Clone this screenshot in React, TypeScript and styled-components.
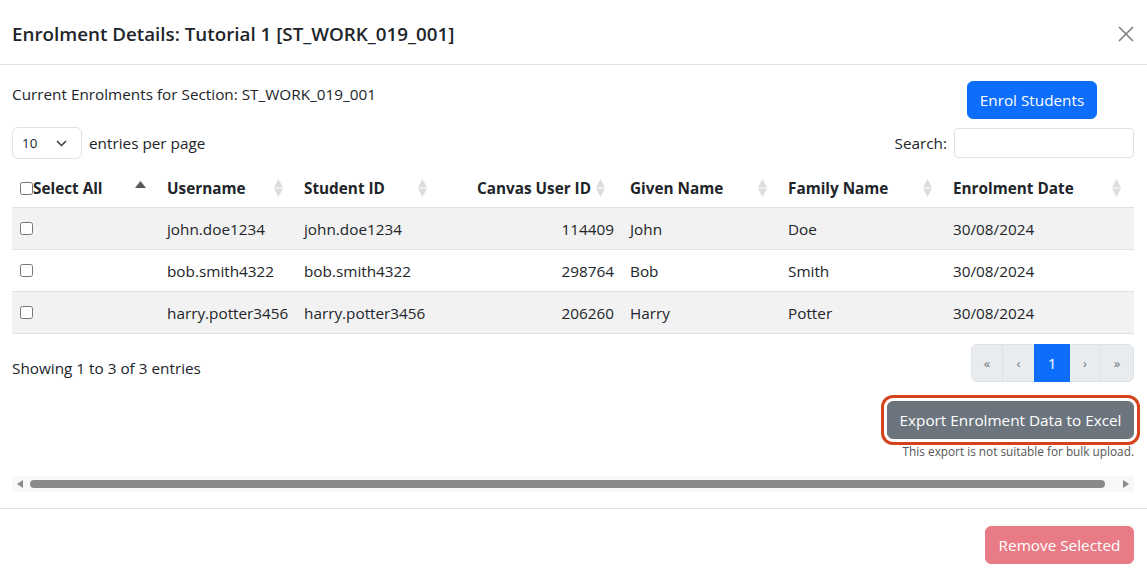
import React from "react";
import styled, { createGlobalStyle } from "styled-components";

const GlobalStyle = createGlobalStyle`
  html, body { margin: 0; padding: 0; background: #fff; }
  body {
    font-family: "Open Sans", "Noto Sans", sans-serif;
    font-size: 15.3px;
    line-height: 24px;
    color: #212529;
  }
  * { box-sizing: border-box; }
`;

const Modal = styled.div`
  width: 1147px;
  display: flex;
  flex-direction: column;
`;

const Header = styled.header`
  height: 65px;
  padding: 3px 13px 0 12px;
  border-bottom: 1px solid #dee2e6;
  display: flex;
  align-items: center;
  justify-content: space-between;
`;

const Title = styled.h1`
  margin: 0;
  font-size: 18.8px;
  font-weight: 600;
  line-height: 28px;
  color: #212529;
`;

const CloseButton = styled.button`
  width: 16px;
  height: 16px;
  padding: 0;
  border: 0;
  background: transparent;
  display: flex;
  opacity: 0.5;
  cursor: pointer;
`;

const Body = styled.section`
  padding: 16px 13px 16px 12px;
  display: flex;
  flex-direction: column;
`;

const TopRow = styled.div`
  display: flex;
  justify-content: space-between;
  align-items: flex-start;
`;

const SectionCaption = styled.p`
  margin: 1px 0 0;
`;

const Button = styled.button<{ $variant: "primary" | "secondary" | "danger"; $w: number }>`
  width: ${(p) => p.$w}px;
  height: 38px;
  font-family: inherit;
  font-size: 15.3px;
  line-height: 24px;
  padding: 0;
  text-align: center;
  white-space: nowrap;
  border-radius: 6px;
  border: 1px solid transparent;
  color: #fff;
  cursor: pointer;
  background: ${(p) =>
    p.$variant === "primary" ? "#0d6efd" : p.$variant === "secondary" ? "#6c757d" : "#dc3545"};
  border-color: ${(p) =>
    p.$variant === "primary" ? "#0d6efd" : p.$variant === "secondary" ? "#6c757d" : "#dc3545"};
  &:disabled {
    opacity: 0.65;
    cursor: default;
  }
`;

const EnrolButton = styled(Button)`
  margin-right: 37px;
`;

const ControlsRow = styled.div`
  margin-top: 8px;
  display: flex;
  justify-content: space-between;
  align-items: center;
`;

const Control = styled.label`
  display: flex;
  align-items: center;
  gap: 7px;
`;

const LengthSelect = styled.div`
  width: 70px;
  height: 32px;
  border: 1px solid #dee2e6;
  border-radius: 6px;
  padding: 0 14px 0 9px;
  display: flex;
  align-items: center;
  justify-content: space-between;
  font-size: 13.4px;
`;

const SearchInput = styled.input`
  width: 180px;
  height: 30px;
  border: 1px solid #dee2e6;
  border-radius: 4px;
  font-family: inherit;
  font-size: 13.4px;
  padding: 0 8px;
  margin-top: -1px;
`;

const Table = styled.table`
  margin-top: 8px;
  width: 1122px;
  border-collapse: collapse;
  table-layout: fixed;
`;

const HeadCell = styled.th<{ $right?: boolean }>`
  padding: 9px ${(p) => (p.$right ? "17px" : "13px")} 7px 8px;
  font-weight: 700;
  text-align: left;
  border-bottom: 1px solid #dee2e6;
  line-height: 24px;
`;

const HeadInner = styled.div<{ $right?: boolean }>`
  display: flex;
  align-items: center;
  justify-content: ${(p) => (p.$right ? "flex-end" : "space-between")};
  gap: 5px;
  white-space: nowrap;
`;

const HeadLabel = styled.span`
  display: flex;
  align-items: center;
`;

const CheckBox = styled.input`
  width: 13px;
  height: 13px;
  margin: 0;
`;

const Row = styled.tr<{ $striped: boolean }>`
  background: ${(p) => (p.$striped ? "#f2f2f2" : "#fff")};
`;

const Cell = styled.td<{ $right?: boolean }>`
  padding: 9px 8px 8px;
  line-height: 24px;
  border-bottom: 1px solid #dee2e6;
  text-align: ${(p) => (p.$right ? "right" : "left")};
  white-space: nowrap;
  vertical-align: middle;
`;

const CheckCell = styled(Cell)`
  padding-top: 8px;
  & > input {
    display: block;
  }
`;

const InfoRow = styled.div`
  margin-top: 10px;
  display: flex;
  justify-content: space-between;
  align-items: flex-start;
`;

const Info = styled.div`
  padding-top: 12px;
`;

const Pagination = styled.ul`
  list-style: none;
  margin: 0;
  padding: 0;
  display: flex;
`;

const PageItem = styled.li<{ $active?: boolean; $w: number }>`
  width: ${(p) => p.$w}px;
  height: 38px;
  margin-left: -1px;
  display: flex;
  align-items: center;
  justify-content: center;
  border: 1px solid ${(p) => (p.$active ? "#0d6efd" : "#dee2e6")};
  background: ${(p) => (p.$active ? "#0d6efd" : "#e9ecef")};
  color: ${(p) => (p.$active ? "#fff" : "#6c757d")};
  font-size: ${(p) => (p.$active ? "15.3px" : "13px")};
  position: relative;
  z-index: ${(p) => (p.$active ? 1 : 0)};
  &:first-child {
    margin-left: 0;
    border-radius: 6px 0 0 6px;
  }
  &:last-child {
    border-radius: 0 6px 6px 0;
  }
`;

const ExportBlock = styled.div`
  margin-top: 19px;
  display: flex;
  flex-direction: column;
  align-items: flex-end;
`;

const ExportButton = styled(Button)`
  outline: 3px solid #d6421c;
  outline-offset: 3px;
`;

const Note = styled.small`
  margin-top: 5px;
  font-size: 11.8px;
  line-height: 14px;
  color: #555;
`;

const ScrollTrack = styled.div`
  margin-top: 18px;
  height: 16px;
  background: #f8f8f8;
  display: flex;
  align-items: center;
  padding: 0 5px;
  gap: 7px;
`;

const ScrollThumb = styled.div`
  flex: 1;
  height: 8px;
  border-radius: 4px;
  background: #8a8a8a;
  margin-right: 11px;
`;

const Footer = styled.footer`
  border-top: 1px solid #dee2e6;
  padding: 17px 13px 8px 12px;
  display: flex;
  justify-content: flex-end;
`;

const SortIcon = ({ active }: { active?: boolean }) =>
  active ? (
    <svg width="11" height="18" viewBox="0 0 11 18">
      <polygon points="5.5,2 11,9 0,9" fill="#595959" />
    </svg>
  ) : (
    <svg width="9" height="18" viewBox="0 0 9 18">
      <polygon points="4.5,0 9,8.5 0,8.5" fill="#dddddd" />
      <polygon points="0,9.5 9,9.5 4.5,18" fill="#dddddd" />
    </svg>
  );

const Arrow = ({ dir }: { dir: "left" | "right" }) => (
  <svg width="6" height="8" viewBox="0 0 6 8">
    <polygon points={dir === "left" ? "6,0 6,8 0,4" : "0,0 0,8 6,4"} fill="#8a8a8a" />
  </svg>
);

const columns = [
  { label: "Username", w: 137 },
  { label: "Student ID", w: 144 },
  { label: "Canvas User ID", w: 182, right: true },
  { label: "Given Name", w: 158 },
  { label: "Family Name", w: 165 },
  { label: "Enrolment Date", w: 189 },
];

const rows = [
  ["john.doe1234", "john.doe1234", "114409", "John", "Doe", "30/08/2024"],
  ["bob.smith4322", "bob.smith4322", "298764", "Bob", "Smith", "30/08/2024"],
  ["harry.potter3456", "harry.potter3456", "206260", "Harry", "Potter", "30/08/2024"],
];

export default function App() {
  return (
    <Modal>
      <GlobalStyle />
      <Header>
        <Title>Enrolment Details: Tutorial 1 [ST_WORK_019_001]</Title>
        <CloseButton aria-label="Close">
          <svg width="16" height="16" viewBox="0 0 16 16">
            <path d="M1 1 L15 15 M15 1 L1 15" stroke="#000" strokeWidth="1.6" />
          </svg>
        </CloseButton>
      </Header>
      <Body>
        <TopRow>
          <SectionCaption>Current Enrolments for Section: ST_WORK_019_001</SectionCaption>
          <EnrolButton $variant="primary" $w={130}>
            Enrol Students
          </EnrolButton>
        </TopRow>
        <ControlsRow>
          <Control>
            <LengthSelect>
              <span>10</span>
              <svg width="11" height="7" viewBox="0 0 11 7">
                <polyline points="1,1 5.5,5.5 10,1" fill="none" stroke="#343a40" strokeWidth="1.5" />
              </svg>
            </LengthSelect>
            entries per page
          </Control>
          <Control>
            Search:
            <SearchInput type="search" />
          </Control>
        </ControlsRow>
        <Table>
          <colgroup>
            <col style={{ width: 147 }} />
            {columns.map((c) => (
              <col key={c.label} style={{ width: c.w }} />
            ))}
          </colgroup>
          <thead>
            <tr>
              <HeadCell>
                <HeadInner>
                  <HeadLabel>
                    <CheckBox type="checkbox" />
                    Select All
                  </HeadLabel>
                  <SortIcon active />
                </HeadInner>
              </HeadCell>
              {columns.map((c) => (
                <HeadCell key={c.label} $right={c.right}>
                  <HeadInner $right={c.right}>
                    <HeadLabel>{c.label}</HeadLabel>
                    <SortIcon />
                  </HeadInner>
                </HeadCell>
              ))}
            </tr>
          </thead>
          <tbody>
            {rows.map((r, i) => (
              <Row key={r[0]} $striped={i % 2 === 0}>
                <CheckCell>
                  <CheckBox type="checkbox" />
                </CheckCell>
                {r.map((v, j) => (
                  <Cell key={j} $right={columns[j].right}>
                    {v}
                  </Cell>
                ))}
              </Row>
            ))}
          </tbody>
        </Table>
        <InfoRow>
          <Info>Showing 1 to 3 of 3 entries</Info>
          <Pagination>
            <PageItem $w={32}>«</PageItem>
            <PageItem $w={33}>‹</PageItem>
            <PageItem $w={36} $active>
              1
            </PageItem>
            <PageItem $w={32}>›</PageItem>
            <PageItem $w={34}>»</PageItem>
          </Pagination>
        </InfoRow>
        <ExportBlock>
          <ExportButton $variant="secondary" $w={247}>
            Export Enrolment Data to Excel
          </ExportButton>
          <Note>This export is not suitable for bulk upload.</Note>
        </ExportBlock>
        <ScrollTrack>
          <Arrow dir="left" />
          <ScrollThumb />
          <Arrow dir="right" />
        </ScrollTrack>
      </Body>
      <Footer>
        <Button $variant="danger" $w={149} disabled>
          Remove Selected
        </Button>
      </Footer>
    </Modal>
  );
}
